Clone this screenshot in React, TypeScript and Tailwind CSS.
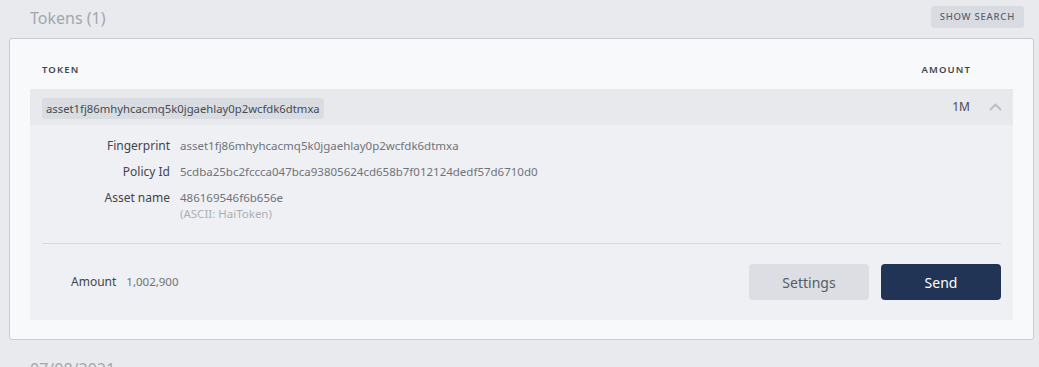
const details = [
  { label: "Fingerprint", value: "asset1fj86mhyhcacmq5k0jgaehlay0p2wcfdk6dtmxa" },
  { label: "Policy Id", value: "5cdba25bc2fccca047bca93805624cd658b7f012124dedf57d6710d0" },
];

export default function App() {
  return (
    <div className="h-[367px] overflow-hidden bg-[#e8eaee] pl-[9px] pr-[5px] font-['Noto_Sans',sans-serif]">
      {/* Title */}
      <div className="flex h-[38px] items-start justify-between pl-[21px] pr-[10px]">
        <h2 className="pt-[7px] text-[16px] leading-[22px] text-[#a3a7ad]">Tokens (1)</h2>
        <button className="mt-[6px] h-[22px] rounded-[3px] bg-[#d8dce2] px-[9px] text-[9.5px] font-medium uppercase tracking-[0.08em] text-[#5b616a]">
          Show search
        </button>
      </div>

      {/* Card */}
      <div className="rounded-[3px] border border-[#c8ccd3] bg-[#f8f9fb] px-[20px] pb-[19px] pt-[19px]">
        <div className="flex h-[31px] items-start pt-[5px] text-[9.5px] font-semibold uppercase tracking-[0.12em] text-[#3f454d]">
          <div className="flex-1 pl-[12px]">Token</div>
          <div className="pr-[42px]">Amount</div>
        </div>

        <div className="flex h-[36px] items-center bg-[#e7e9ed] pl-[12px]">
          <div className="flex-1">
            <span className="inline-block rounded-[3px] bg-[#d9dce1] px-[4px] py-[2px] text-[11.3px] leading-[17px] text-[#464c54]">
              asset1fj86mhyhcacmq5k0jgaehlay0p2wcfdk6dtmxa
            </span>
          </div>
          <div className="text-[12px] text-[#464c54]">1M</div>
          <div className="flex w-[43px] justify-end pr-[11px]">
            <svg width="13" height="8" viewBox="0 0 13 8" fill="none">
              <path d="M1 7 L6.5 1.5 L12 7" stroke="#b9bdc3" strokeWidth="1.8" />
            </svg>
          </div>
        </div>

        <div className="bg-[#eff0f3] px-[12px] pb-[20px] pt-[13px]">
          <div className="flex flex-col gap-[10px]">
            {details.map((d) => (
              <div key={d.label} className="flex text-[12px] leading-[16px]">
                <div className="w-[138px] pr-[10px] text-right text-[#3f454d]">{d.label}</div>
                <div className="text-[11.5px] text-[#6e737b]">{d.value}</div>
              </div>
            ))}
            <div className="flex text-[12px] leading-[16px]">
              <div className="w-[138px] pr-[10px] text-right text-[#3f454d]">Asset name</div>
              <div className="text-[11.5px]">
                <div className="text-[#6e737b]">486169546f6b656e</div>
                <div className="text-[#abafb5]">(ASCII: HaiToken)</div>
              </div>
            </div>
          </div>

          <div className="mt-[21px] border-t border-[#d6d9de]" />

          <div className="mt-[20px] flex items-center">
            <div className="flex flex-1 items-center pl-[29px] text-[12px]">
              <span className="text-[#3f454d]">Amount</span>
              <span className="ml-[10px] text-[11.5px] text-[#6e737b]">1,002,900</span>
            </div>
            <div className="flex gap-[12px]">
              <button className="h-[36px] w-[120px] rounded-[4px] bg-[#dcdee3] text-[14px] text-[#565c64]">
                Settings
              </button>
              <button className="h-[36px] w-[120px] rounded-[4px] bg-[#213455] text-[14px] text-white">
                Send
              </button>
            </div>
          </div>
        </div>
      </div>

      <div className="pl-[21px] pt-[18px] text-[16px] leading-[22px] text-[#a3a7ad]">07/08/2021</div>
    </div>
  );
}
